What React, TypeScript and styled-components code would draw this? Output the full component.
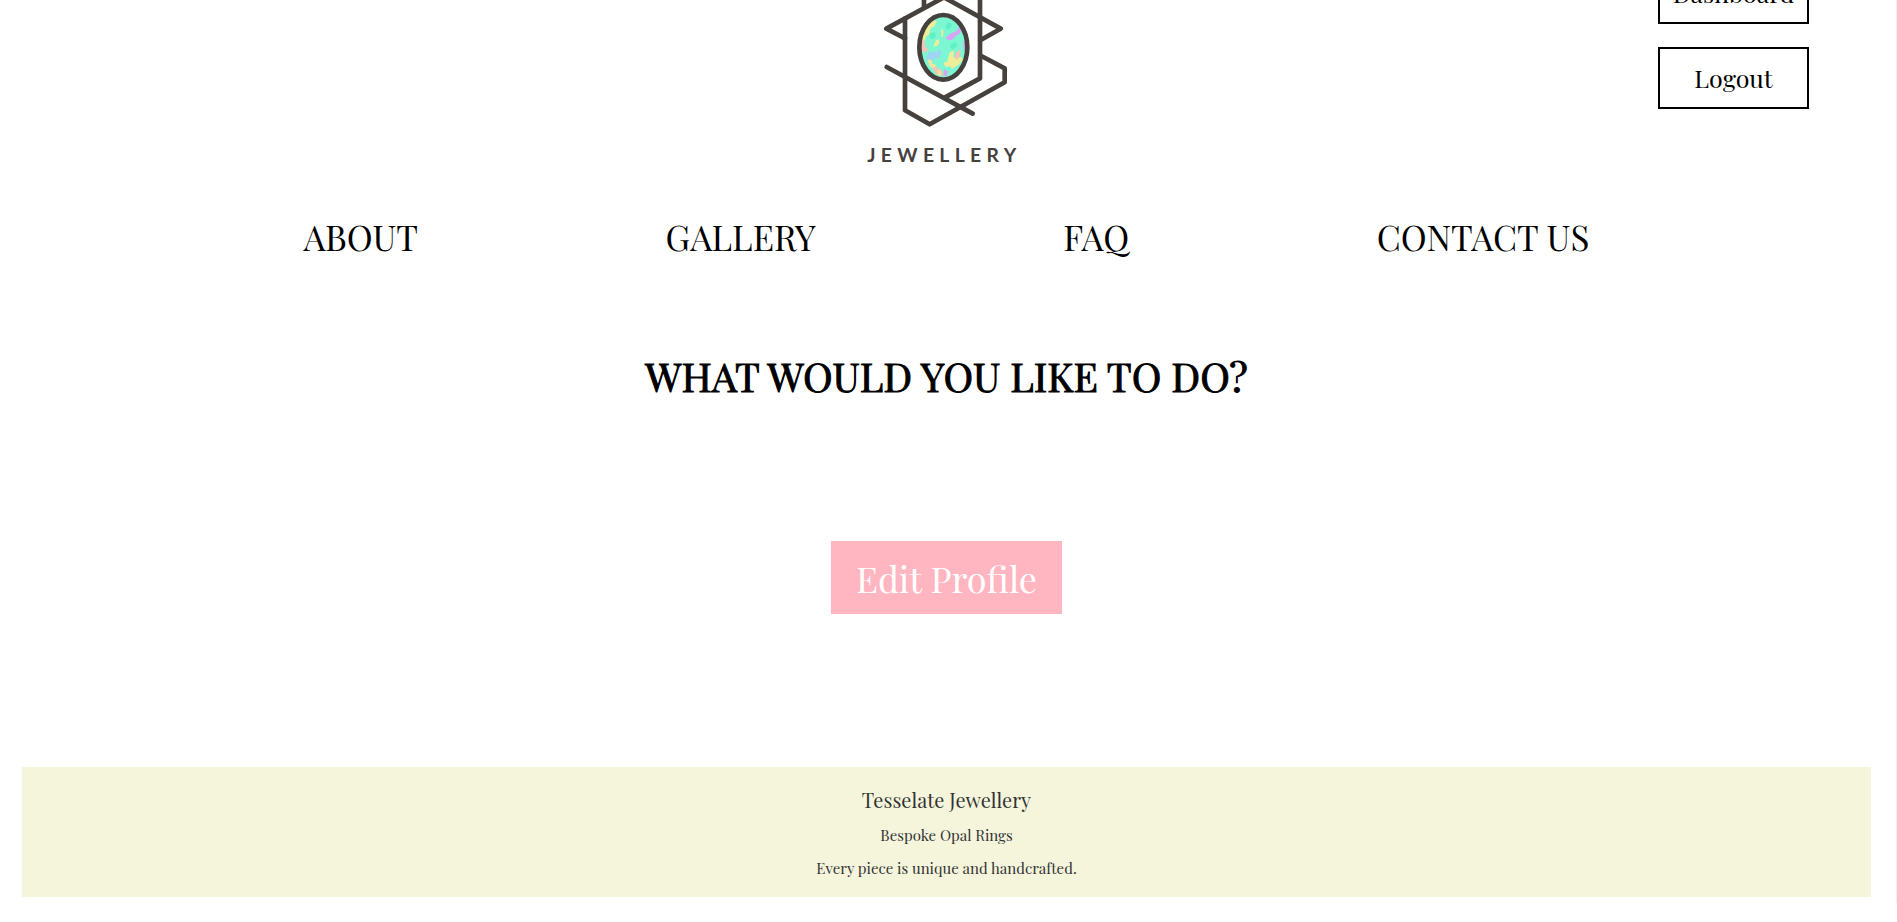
import React from "react";
import styled, { createGlobalStyle } from "styled-components";

const GlobalStyle = createGlobalStyle`
  *, *::before, *::after { box-sizing: border-box; }
  body {
    margin: 0;
    background: #fff;
    color: #000;
    font-family: "Playfair Display", "Liberation Serif", serif;
  }
`;

const Page = styled.div`
  display: flex;
  flex-direction: column;
  padding: 0 3px 6px 0;
  border-right: 1px solid #f0f0f0;
  overflow: hidden;
`;

const Header = styled.header`
  display: grid;
  grid-template-columns: 1fr auto 1fr;
  align-items: start;
`;

const LogoLink = styled.a`
  grid-column: 2;
  display: block;
`;

const LogoDrawing = styled.svg`
  display: block;
  width: 210px;
  height: 180px;
`;

const Account = styled.div`
  display: flex;
  flex-direction: column;
  gap: 23px;
  justify-self: end;
  width: 151px;
  margin: -38px 84px 0 0;
`;

const AccountButton = styled.button`
  height: 62px;
  padding: 0;
  border: 2px solid #000;
  background: #fff;
  color: #000;
  font-family: inherit;
  font-size: 25px;
  line-height: 36px;
  cursor: pointer;
`;

const Nav = styled.nav`
  display: flex;
  justify-content: space-around;
  align-self: center;
  width: 81%;
  margin-top: 33px;
`;

const NavLink = styled.a`
  color: #000;
  font-size: 35px;
  line-height: 48px;
  text-decoration: none;
`;

const Main = styled.main`
  display: flex;
  flex-direction: column;
  align-items: center;
`;

const Title = styled.h1`
  margin: 87px 0 0;
  font-size: 40px;
  font-weight: 400;
  line-height: 56px;
  -webkit-text-stroke: 1px #000;
`;

const EditButton = styled.button`
  height: 73px;
  margin: 137px 0 153px;
  padding: 0 25px;
  border: 0;
  background: #ffb6c1;
  color: #fff;
  font-family: inherit;
  font-size: 36px;
  line-height: 48px;
  cursor: pointer;
`;

const Footer = styled.footer`
  margin: 0 22px;
  height: 130px;
  padding-top: 17px;
  background: #f5f5dc;
  color: #333;
  text-align: center;
`;

const Brand = styled.p`
  margin: 0 0 7px;
  font-size: 20px;
  line-height: 32px;
`;

const Tagline = styled.p`
  margin: 0 0 9px;
  font-size: 15px;
  line-height: 24px;
`;

const navItems = ["ABOUT", "GALLERY", "FAQ", "CONTACT US"];

function Logo() {
  return (
    <LogoDrawing viewBox="6 0 630 540" role="img" aria-label="Tesselate Jewellery">
      <defs>
        <clipPath id="stone">
          <ellipse cx="310" cy="142" rx="67" ry="92" />
        </clipPath>
      </defs>
      <g fill="none" stroke="#46413d" strokeWidth="14" strokeLinecap="round" strokeLinejoin="round">
        <path d="M252 -20V24" strokeLinecap="butt" />
        <path d="M420 -20V235L314 293" />
        <path d="M195 115L139 86L312 -8L482 86L426 118" />
        <path d="M195 56V331L269 373L494 247V205L424 168" />
        <path d="M140 201L398 341" />
      </g>
      <g clipPath="url(#stone)">
        <rect x="240" y="45" width="140" height="195" fill="#7df7d2" />
        <path d="M280 58l10 6-8 16-10 4-4 18-10 8-6 18-10-4 8-34zM288 120l8-2 2 12-8 8-10 2zM304 88l5 0 1 18-6 6zM330 156l12-4-2 18 10 6 14-6 4 10-12 14-20 12-6-8-12 4-8-12 12-6 4-16z" fill="#efee98" />
        <path d="M316 114l16-14 14-4 12-14 8 2-6 16-12 8-12 12-12 0zM370 124l8-2-2 32-6-6zM312 208l12 6-4 16-10-4z" fill="#d6a6f5" />
        <path d="M264 160l16-6 10 4 6-12 8 10-4 16-18 4-10 12-14-10z" fill="#9fd5f2" />
        <path d="M248 118l6 4 2 18 8 8-8 10-14-8zM348 158l8-8 6 4-2 16-12 10-4-8zM276 204l12-6 6 8 10 2 6 20-20-4z" fill="#f6c3b4" />
        <path d="M262 178l12 2 4 12 10 2-4 10-14-4zM292 214l8-4 4 14-8 4z" fill="#f1e79a" />
        <path d="M324 66l12 6-4 12-12 6-4-10zM270 100l14-4 4 12-10 10-10-4zM334 132l14-6 4 12-14 10-8-6z" fill="#5ef0c0" />
      </g>
      <ellipse cx="310" cy="142" rx="72" ry="97" fill="none" stroke="#46413d" strokeWidth="14" />
      <text
        x="313"
        y="486"
        textAnchor="middle"
        fill="#46413d"
        fontFamily="Lato, sans-serif"
        fontSize="58"
        fontWeight="700"
        letterSpacing="16"
      >
        JEWELLERY
      </text>
    </LogoDrawing>
  );
}

export default function App() {
  return (
    <>
      <GlobalStyle />
      <Page>
        <Header>
          <LogoLink href="#">
            <Logo />
          </LogoLink>
          <Account>
            <AccountButton type="button">Dashboard</AccountButton>
            <AccountButton type="button">Logout</AccountButton>
          </Account>
        </Header>
        <Nav>
          {navItems.map((item) => (
            <NavLink key={item} href="#">
              {item}
            </NavLink>
          ))}
        </Nav>
        <Main>
          <Title>WHAT WOULD YOU LIKE TO DO?</Title>
          <EditButton type="button">Edit Profile</EditButton>
        </Main>
        <Footer>
          <Brand>Tesselate Jewellery</Brand>
          <Tagline>Bespoke Opal Rings</Tagline>
          <Tagline>Every piece is unique and handcrafted.</Tagline>
        </Footer>
      </Page>
    </>
  );
}
